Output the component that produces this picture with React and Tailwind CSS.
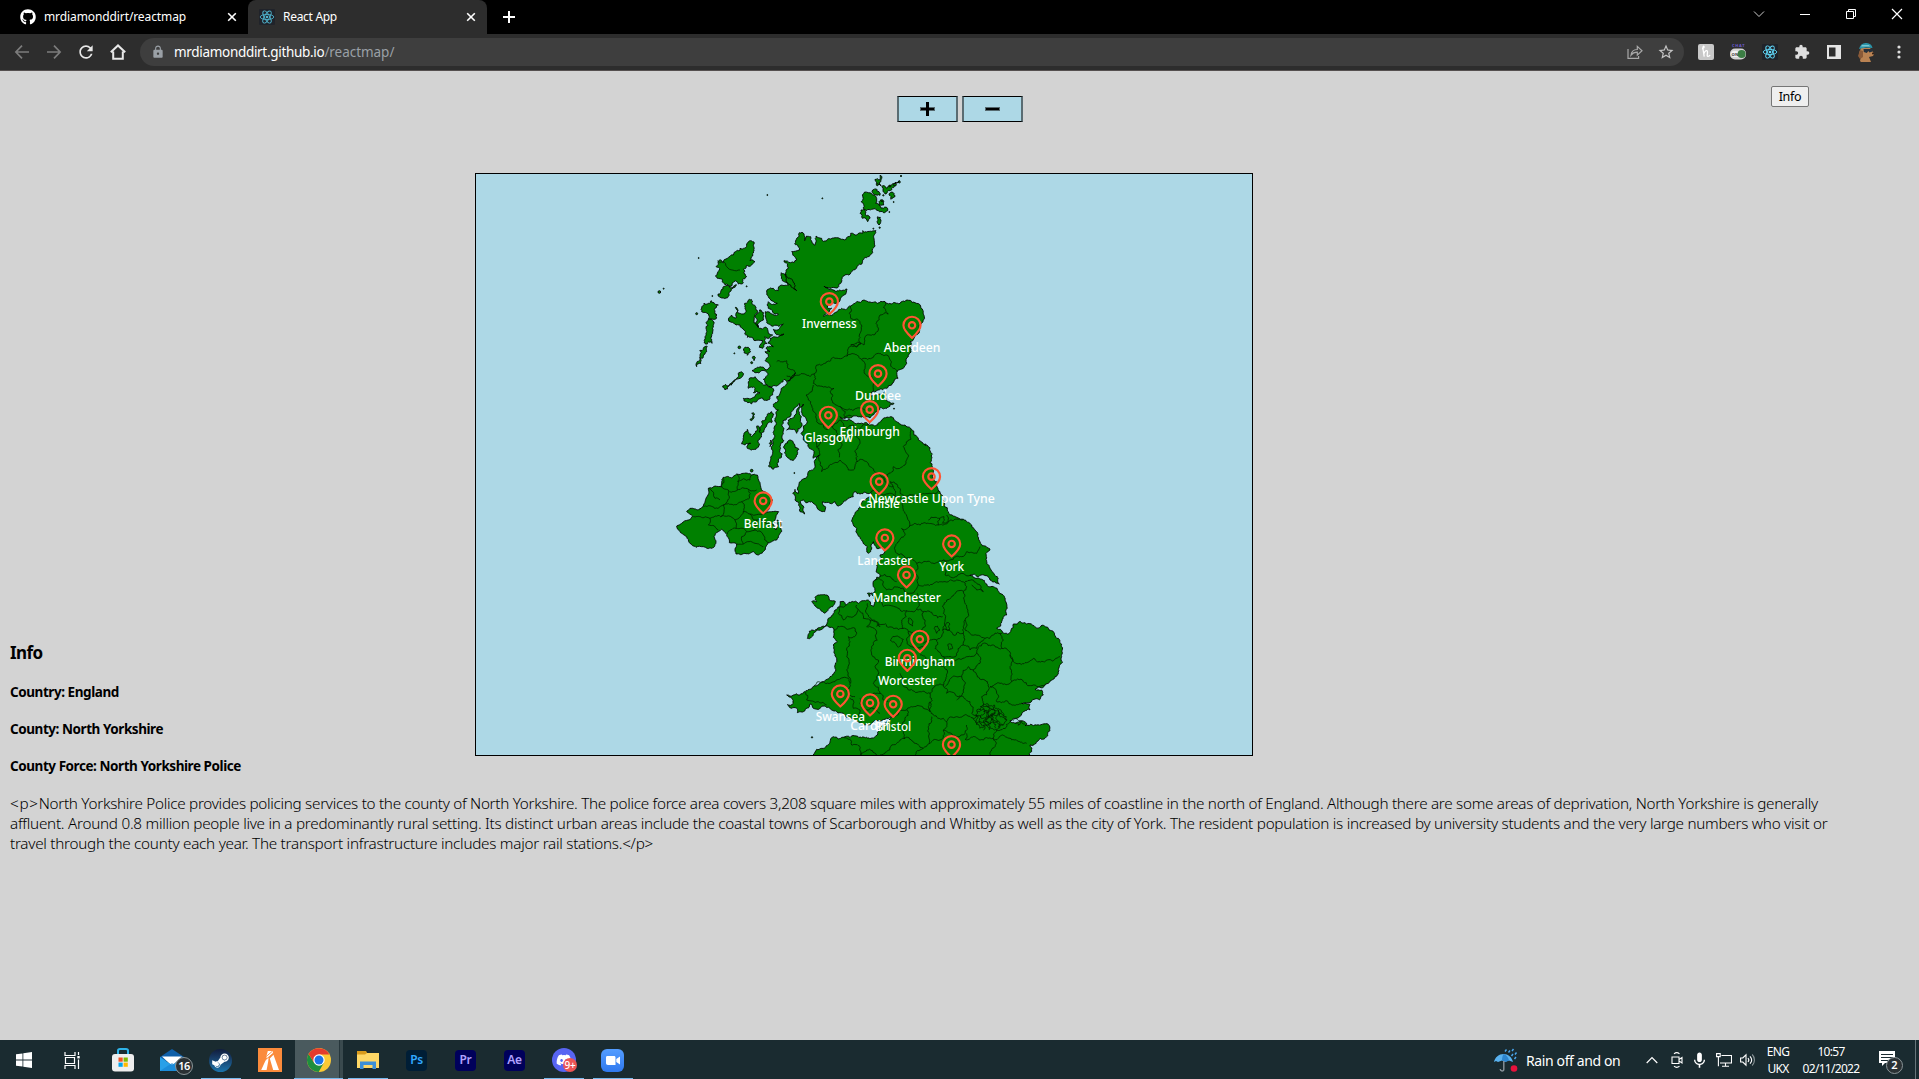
import React from "react";
import { FaGithub, FaSteamSymbol, FaDiscord } from "react-icons/fa";
import { MdExtension, MdRefresh, MdLock, MdStarBorder, MdMic } from "react-icons/md";

/* ---------- coastline helpers ---------- */

// Turns a coarse "x,y x,y" outline into an irregular, coast-like path.
function rough(str, amount, closed, seed = 7) {
  let s = seed;
  const rnd = () => {
    s = (s * 16807) % 2147483647;
    return s / 2147483647 - 0.5;
  };
  const pts = str.trim().split(/\s+/).map((p) => p.split(",").map(Number));
  if (closed) pts.push(pts[0]);
  const out = [pts[0]];
  const split = (a, b) => {
    const dx = b[0] - a[0];
    const dy = b[1] - a[1];
    const len = Math.hypot(dx, dy);
    if (len < 6) {
      out.push(b);
      return;
    }
    const k = rnd() * amount;
    const m = [(a[0] + b[0]) / 2 - dy * k, (a[1] + b[1]) / 2 + dx * k];
    split(a, m);
    split(m, b);
  };
  for (let i = 1; i < pts.length; i++) split(pts[i - 1], pts[i]);
  return "M" + out.map((p) => p[0].toFixed(1) + " " + p[1].toFixed(1)).join("L") + (closed ? "Z" : "");
}

const shift = (str, dx, dy) =>
  str
    .trim()
    .split(/\s+/)
    .map((p) => {
      const [x, y] = p.split(",").map(Number);
      return x + dx + "," + (y + dy);
    })
    .join(" ");

const NORTH =
  "478,188 492,192 494,212 500,198 512,200 516,216 524,226 528,198 545,205 550,214 565,206 580,204 600,206 632,198 632,190 650,195 668,190 668,182 680,186 695,184 708,182 702,205 705,228 698,248 672,265 655,285 640,300 625,315 605,328 597,342 590,354 570,355 552,348 566,358 592,362 605,362 621,357 612,375 600,392 588,400 575,402 562,412 575,414 566,428 550,438 575,436 592,425 605,415 632,408 650,395 672,390 690,396 712,400 735,395 765,398 795,395 825,398 842,408 850,425 853,440 845,460 838,485 822,505 810,530 805,560 800,580 790,595 772,602 774,625 755,645 740,655 715,660 700,664 692,678 708,672 735,665 735,680 762,700 745,712 722,712 712,722 700,735 690,744 660,740 640,738 615,745 600,740 612,750 640,755 680,758 700,765 722,755 730,745 745,742 770,755 795,765 812,775 822,795 835,810 850,822 864,828 870,842 875,865";

const EAST_AND_SOUTH =
  "457,200 470,245 480,275 487,300 492,318 505,335 520,348 550,358 575,375 590,395 597,420 608,438 630,447 618,460 618,478 628,500 640,518 652,530 658,552 645,545 630,540 612,525 595,530 570,526 595,534 615,548 640,560 660,580 675,600 682,625 680,645 665,665 650,685 668,697 682,702 693,690 700,672 740,672 790,676 815,692 835,715 845,740 845,770 838,800 825,830 805,850 790,862 765,868 785,870 790,885 778,900 750,908 725,910 750,914 750,930 725,942 700,955 690,962 705,970 720,964 740,970 735,977 770,975 805,973 805,995 795,1015 770,1025 750,1035 755,1055 745,1085 105,1085 110,1048 125,1045 150,1025 160,1010 190,1012 230,1008 260,1012 285,1010 300,985 320,965 337,948 320,955 300,963 280,965 255,975 235,965 215,955 190,940 170,935 155,930 135,918 120,925 100,925 90,912 75,932 52,938 50,925 22,914 40,910 35,895 20,885 40,885 75,875 100,860 130,845 150,830 165,805 170,780 162,755 160,735 172,725 160,712 162,690 145,680 120,690 100,700 82,715 95,690 125,680 145,655 165,630 180,605 200,614 235,610 250,602 262,600 280,620 285,600 274,580 268,590 262,580 285,572 280,560 285,540 300,530 288,515 290,495 300,480 300,465 315,455 305,440 290,445 280,425 272,455 265,460 262,440 245,420 230,385 218,368 225,340 240,320 255,300 275,290 272,278 240,282 225,275 220,290 200,300 175,318 165,305 150,310 128,305 134,335 110,320 95,305 70,300 60,305 74,342 60,335 45,300 38,280 45,268 55,280 75,235 85,215 105,200 105,180 118,165";

const WEST =
  "520,865 522,850 508,835 490,810 483,790 490,768 502,755 494,740 484,725 490,702 478,715 484,740 470,790 460,778 440,780 445,750 465,735 478,700 455,725 440,745 425,765 430,790 420,830 415,870 416,890 400,898 385,888 390,875 398,850 404,800 402,775 405,745 415,720 400,710 415,690 410,680 432,650 450,632 466,608 440,635 432,628 410,648 380,645 370,628 385,612 345,608 336,602 345,596 375,598 390,590 375,572 385,560 375,545 390,545 378,535 400,530 385,520 390,505 412,502 420,498 432,492 405,488 400,478 430,462 400,468 380,458 376,425 402,435 415,432 385,415 385,395 412,400 385,380 384,358 400,355 415,362 420,348 445,346 424,325 424,308 445,325 470,362 452,345 436,310 445,295 432,272 452,278 470,270 455,245 478,240 464,222 470,205";

const MAINLAND = NORTH + " " + shift(EAST_AND_SOUTH, 420, 690) + " " + WEST;

const ISLANDS = [
  "332,212 342,232 338,258 330,272 345,275 335,285 318,288 310,298 320,320 310,338 295,342 282,335 275,348 255,345 232,325 226,318 238,300 228,290 236,272 250,278 262,265 280,255 300,235 320,222",
  "250,350 270,354 290,345 270,365 250,384 234,372 244,360",
  "185,410 205,400 214,392 222,398 235,405 225,425 230,435 222,448 205,445 205,432 185,425",
  "200,455 215,448 222,460 218,490 212,505 216,520 196,522 195,500 198,475",
  "180,555 190,535 202,530 200,545 190,560 180,565 170,590 168,582",
  "270,455 275,435 290,442 292,425 286,412 305,432 318,425 314,400 328,388 340,405 342,450 358,475 374,472 385,490 398,495 375,500 368,535 358,532 368,512 345,512 322,502 312,480 300,465 285,462",
  "358,420 363,420 360,455 354,472 352,450",
  "310,540 325,532 332,545 322,556 312,548",
  "338,560 346,562 342,572",
  "325,640 345,620 360,635 385,650 402,662 390,685 365,684 350,695 320,695 310,685 345,680 360,668 340,668 345,655 325,655",
  "248,648 265,648 290,625 308,608 305,622 275,645 255,660",
  "395,725 398,742 380,765 365,790 358,792 362,770 378,748",
  "350,768 358,785 354,815 356,828 335,840 322,835 332,820 305,822 312,790 322,778 335,800 345,790",
  "445,812 460,820 468,862 455,870 440,860 432,835",
  "335,730 344,732 335,752 330,748",
  "392,810 390,830 388,820",
  "667,75 685,68 703,75 710,90 707,100 720,108 730,115 740,112 743,122 730,128 715,122 695,118 680,122 670,115",
  "663,120 677,125 690,145 683,155 667,145 660,130",
  "713,140 723,150 717,165 711,155",
  "705,28 717,30 720,16 726,20 717,38 723,48 709,40",
  "725,50 740,55 755,45 770,38 778,32 763,50 745,62 735,72 729,60",
  "747,75 760,68 765,80 753,88",
  "698,60 717,65 720,76 703,74",
  "717,95 730,92 731,105 722,106",
];

const IRELAND =
  "250,112 275,114 290,102 310,100 335,105 352,105 358,125 364,148 372,155 388,165 398,180 388,205 370,222 395,215 416,215 408,230 400,252 408,270 412,240 422,245 425,275 410,300 385,308 375,330 355,345 340,335 315,340 288,342 285,325 290,312 268,308 262,290 245,268 235,275 222,290 228,305 215,325 190,320 168,322 148,308 140,290 120,275 110,258 125,250 145,240 158,228 140,215 150,205 175,210 190,198 198,175 205,145 225,138 245,140";

const ANGLESEY = "95,605 110,605 105,592 115,585 140,585 148,600 166,604 158,620 135,640 115,625 105,618";

const NORTH_BORDERS = [
  "632,408 628,430 632,445 660,460 658,495 662,522 632,525",
  "662,522 635,528 622,558 580,562 560,575 530,585 522,612 510,620 440,618",
  "735,395 730,412 745,432 720,435 708,460 715,480 690,495 675,500 672,525 632,525",
  "622,558 665,568 700,562 715,550 740,555 752,572 760,595 774,605",
  "665,568 672,600 695,620 700,664",
  "522,612 520,640 555,650 582,655 570,665 575,690 600,710 625,718 650,715 690,735",
  "520,645 498,675 505,690 518,720 530,755",
  "600,710 615,745 640,738",
  "466,608 440,572 410,575",
  "530,755 560,780 575,770 600,750 615,775 640,765 660,780",
  "520,805 530,830 535,860 540,875 545,905 560,895 580,880 600,870 625,900 640,900 650,875 660,820 650,800 660,780",
  "660,780 680,765 690,760",
  "650,875 680,875 690,890 715,910 740,940 760,950",
  "795,885 760,890 740,915 745,930",
  "812,775 790,830 805,860 795,885",
  "575,770 590,800 605,820 598,862",
  "530,830 560,810 590,815",
  "232,272 260,290 300,300",
];

const IRELAND_BORDERS = [
  "250,112 245,140 265,150 268,175 250,195 235,205 190,200",
  "292,102 295,125 292,150 268,155",
  "292,125 330,120 335,105",
  "292,150 325,148 350,150",
  "325,148 328,175 305,185 280,195 250,195",
  "305,185 310,215 330,222 370,222",
  "250,195 242,230 210,235 160,230",
  "210,235 205,255 235,270",
  "242,230 285,240 310,215",
  "285,240 288,265 262,282",
  "288,265 320,275 345,270 350,240 330,222",
  "320,275 305,290 310,312 290,312",
  "345,270 370,285 385,308",
  "350,240 380,250 400,252",
  "310,312 345,310 370,320",
  "205,145 225,175 240,180",
];

const SOUTH_BORDERS = [
  "272,278 310,285 345,290 340,265 330,245",
  "330,245 360,280 400,285 450,280 475,272",
  "345,290 370,305 375,340 388,380",
  "388,380 365,385 375,400 345,440 350,460",
  "388,380 420,375 445,370 475,375 500,372 520,362 550,358",
  "475,375 480,355 492,350 488,370 505,365 500,345",
  "445,360 465,352 480,355",
  "350,460 375,475 410,490 440,485 470,488 490,480 520,478",
  "520,478 545,470 560,455 590,460 600,440",
  "490,480 500,500 495,525 530,530 570,526",
  "410,490 405,520 415,555 440,555 470,545 495,545 530,540 545,545",
  "285,540 310,545 320,570 345,560 370,565 385,580 415,555",
  "300,530 330,530 350,545",
  "285,600 310,620 350,622 380,632 410,628 412,580",
  "410,628 430,635 435,660 425,690 405,700",
  "380,632 365,660 368,685 385,695 405,700",
  "385,655 395,660 398,678 388,672 385,655",
  "545,545 560,560 550,575 525,580 500,600 490,640 495,660 488,690 520,705 550,700 555,660 560,620 555,585 550,575",
  "555,545 600,555 610,575 590,570 575,555",
  "555,660 555,690 575,705 615,715 640,705 668,697",
  "430,635 460,645 488,650",
  "462,685 472,678 480,690 470,700 462,685",
  "500,668 510,672 508,690 498,688 500,668",
  "503,735 515,733 518,745 508,750 503,735",
  "488,690 470,720 450,720 430,730",
  "470,720 465,745 490,770 530,765 550,735 550,700",
  "550,735 570,750 590,745 615,715",
  "200,614 180,620 175,640 190,660 220,650 235,630",
  "235,630 250,655 270,660 300,680 290,665 265,645 262,610",
  "235,630 230,615",
  "162,690 190,680 225,685 230,700",
  "230,700 205,710 210,725 200,750 208,790 205,830 212,850",
  "270,660 260,680 290,695 292,720 275,740 275,765 295,780 285,800",
  "290,680 340,685 370,685",
  "331,720 352,708 370,718 355,742 331,720",
  "285,800 290,830 280,850 300,880 270,890",
  "100,860 130,845 165,845 205,835 210,850 200,870 225,890",
  "75,875 80,900 115,905 140,915",
  "210,895 220,925 240,930 245,965",
  "240,895 240,910 260,930 280,925 300,940",
  "300,880 310,900 325,905",
  "420,765 440,780 465,790 495,805 500,830 490,855",
  "385,695 380,720 410,745 430,740",
  "360,820 365,850 385,870 420,875 450,880 470,855 490,855",
  "450,880 445,920 460,945 490,955 500,965",
  "490,770 500,790 530,780 560,770 590,760 610,730 640,735 665,745 670,720 660,700",
  "665,745 690,765 700,785 760,775 790,785 840,770",
  "690,765 690,800 695,845 660,850 630,860",
  "695,845 730,845 760,855 800,850",
  "590,760 600,790 580,810 615,840 625,870",
  "580,810 565,800 545,830 530,830 495,860",
  "545,830 550,870 535,890 500,880 490,855",
  "530,900 550,890 570,905 575,940 590,950",
  "625,870 605,890 610,920 640,930",
  "630,860 650,880 650,905 700,915 725,910",
  "500,965 530,950 560,945 590,970",
  "500,965 490,990 530,1010 555,1000 560,975",
  "560,1000 555,1018 600,1020 640,1015 650,990 690,965",
  "640,1015 645,1040 630,1070",
  "640,1020 690,1015 740,1030",
  "345,950 380,930 430,925 450,935 450,905",
  "380,930 375,960 370,990 375,1015 350,1030 320,1055 260,1050 240,1065",
  "370,1015 400,1025 430,1045 450,1030 445,980 455,950",
  "190,1012 215,1035 240,1040 245,1065",
  "450,1030 480,1020 490,990",
  "405,1070 420,1050 430,1045",
];

const LONDON = [
  "580,955 600,948 620,955 640,945 665,950 680,960",
  "590,935 605,930 620,940 640,928 660,940 672,950",
  "590,975 610,968 630,972 650,966 670,975",
  "600,920 608,945 600,970 610,990",
  "620,915 622,940 618,960 628,990",
  "640,920 632,945 640,965 645,985",
  "655,930 650,950 660,968 658,985",
  "600,985 625,982 650,988 665,975 680,962 670,940 650,925 630,918 605,920 592,935 595,950 588,968 600,985",
  "610,935 630,950 645,938 635,960 620,950",
  "625,945 612,960 625,975 640,958 655,965",
  "700,962 712,958 725,968 735,972",
  "705,970 715,976 722,966",
];

const SPECKS = [
  [382, 75], [547, 85], [176, 264], [58, 366, 4], [71, 356], [320, 349], [170, 431, 3], [217, 378], [283, 550], [298, 532, 4],
  [335, 578, 3], [700, 176], [748, 126], [761, 96], [783, 18, 2], [750, 48, 3], [726, 92, 3], [712, 44, 3], [765, 44, 4],
  [762, 716], [463, 909], [335, 902, 4], [516, 1702, 2], [856, 824, 2], [778, 36, 3], [730, 76, 2], [719, 173, 2],
];

const CITIES = [
  ["Inverness", 568, 436, 164],
  ["Aberdeen", 816, 507, 170],
  ["Dundee", 714, 652, 138],
  ["Glasgow", 565, 777, 148],
  ["Edinburgh", 689, 760, 181],
  ["Carlisle", 717.5, 976, 124],
  ["Newcastle Upon Tyne", 874.5, 961, 380],
  ["Belfast", 369.5, 1034, 116],
  ["Lancaster", 734.5, 1145, 165],
  ["York", 935, 1163, 75],
  ["Manchester", 799.5, 1256, 206],
  ["Birmingham", 839.5, 1449, 211],
  ["Worcester", 802, 1506, 176],
  ["Swansea", 601, 1613, 148],
  ["Cardiff", 690, 1640, 118],
  ["Bristol", 759.5, 1644, 108],
  ["", 934.5, 1765, 0],
];

function MapChart() {
  return (
    <svg viewBox="-492 12 2328 1743" className="block h-full w-full" fontFamily='"Noto Sans", "Open Sans", sans-serif'>
      <g fill="#008000" stroke="#000" strokeWidth="2.6" strokeLinejoin="round">
        <path d={rough(MAINLAND, 0.46, true)} />
        {ISLANDS.map((d, i) => (
          <path key={i} d={rough(d, 0.6, true, 11 + i)} />
        ))}
        <path d={rough(shift(IRELAND, 0, 810), 0.3, true, 5)} />
        <path d={rough(shift(ANGLESEY, 420, 690), 0.35, true, 9)} />
        {SPECKS.map(([x, y, r = 1.5], i) => (
          <circle key={i} cx={x} cy={y} r={r} />
        ))}
      </g>
      <g fill="none" stroke="#001a00" strokeWidth="2.2">
        {NORTH_BORDERS.map((d, i) => (
          <path key={i} d={rough(d, 0.45, false, 21 + i)} />
        ))}
        {IRELAND_BORDERS.map((d, i) => (
          <path key={i} d={rough(shift(d, 0, 810), 0.35, false, 41 + i)} />
        ))}
        {SOUTH_BORDERS.map((d, i) => (
          <path key={i} d={rough(shift(d, 420, 690), 0.45, false, 61 + i)} />
        ))}
        {LONDON.map((d, i) => (
          <path key={i} d={rough(shift(d, 420, 690), 0.7, false, 91 + i)} />
        ))}
      </g>
      {CITIES.map(([name, x, y, w]) => (
        <g key={x} transform={`translate(${x} ${y + 4})`}>
          <g transform="scale(3.22) translate(-12 -24)" fill="none" stroke="#FF5533" strokeWidth="2" strokeLinecap="round" strokeLinejoin="round">
            <circle cx="12" cy="10" r="3" />
            <path d="M12 21.7C17.3 17 20 13 20 10a8 8 0 1 0-16 0c0 3 2.7 6.9 8 11.7z" />
          </g>
          {name && (
            <text x={-w / 2} y="34.500" fontSize="38.500" fontWeight="500" fill="#fff" textLength={w} lengthAdjust="spacingAndGlyphs">
              {name}
            </text>
          )}
        </g>
      ))}
    </svg>
  );
}

/* ---------- small drawings ---------- */

function Atom({ className, color = "#61dafb" }) {
  return (
    <svg viewBox="0 0 16 16" className={className} fill="none" stroke={color} strokeWidth="0.9">
      <rect width="16" height="16" fill="#20232a" stroke="none" rx="1" />
      <ellipse cx="8" cy="8" rx="6.8" ry="2.6" />
      <ellipse cx="8" cy="8" rx="6.8" ry="2.6" transform="rotate(60 8 8)" />
      <ellipse cx="8" cy="8" rx="6.8" ry="2.6" transform="rotate(120 8 8)" />
      <circle cx="8" cy="8" r="1.3" fill={color} stroke="none" />
    </svg>
  );
}

function Cross({ className }) {
  return (
    <svg viewBox="0 0 10 10" className={className} stroke="#fff" strokeWidth="1.6">
      <path d="M1.2 1.2l7.6 7.6M8.8 1.2L1.2 8.8" />
    </svg>
  );
}

function TabStrip() {
  return (
    <div className="flex h-[34px] bg-black text-[12px] text-white">
      <div className="flex w-[248px] items-center pl-5">
        <FaGithub className="size-4" />
        <span className="ml-2 tracking-[-0.1px]">mrdiamonddirt/reactmap</span>
        <Cross className="mr-[11px] ml-auto size-[10px]" />
      </div>
      <div className="flex w-[239px] items-center rounded-t-lg bg-[#2d2d2d] pl-[11px]">
        <Atom className="size-4" color="#4fb3cc" />
        <span className="ml-2 tracking-[-0.3px]">React App</span>
        <Cross className="mr-[11px] ml-auto size-[10px]" />
      </div>
      <div className="flex w-11 items-center justify-center">
        <svg viewBox="0 0 12 12" className="size-3" stroke="#fff" strokeWidth="2">
          <path d="M6 0v12M0 6h12" />
        </svg>
      </div>
      <div className="-mr-px ml-auto flex h-7 text-white">
        <svg viewBox="0 0 12 12" className="mx-[17px] mt-2 size-3" fill="none" stroke="#ccc" strokeWidth="1">
          <path d="M1 3.500l5 5 5-5" />
        </svg>
        <svg viewBox="0 0 12 12" className="mx-[17px] mt-2 size-3" stroke="#fff" strokeWidth="1">
          <path d="M1 6.500h10" />
        </svg>
        <svg viewBox="0 0 12 12" className="mx-[17px] mt-2 size-3" fill="none" stroke="#fff" strokeWidth="1">
          <path d="M1.500 3.500h7v7h-7zM3.500 3.500v-2h7v7h-2" />
        </svg>
        <svg viewBox="0 0 12 12" className="mx-[17px] mt-2 size-3" stroke="#fff" strokeWidth="1.200">
          <path d="M1 1l10 10M11 1L1 11" />
        </svg>
      </div>
    </div>
  );
}

function Toolbar() {
  return (
    <div className="flex h-[37px] items-center border-b border-[#55504f] bg-[#2d2d2d]">
      <div className="flex w-[140px] items-center pl-[14px]">
        <svg viewBox="0 0 16 16" className="size-4" fill="none" stroke="#7c7c7c" strokeWidth="1.700">
          <path d="M15 8H2M8 1.700L1.900 8 8 14.300" />
        </svg>
        <svg viewBox="0 0 16 16" className="ml-4 size-4" fill="none" stroke="#7c7c7c" strokeWidth="1.700">
          <path d="M1 8h13M8 1.700L14.100 8 8 14.300" />
        </svg>
        <MdRefresh className="ml-[14px] size-5 text-[#e8e8e8]" />
        <svg viewBox="0 0 16 16" className="ml-[14px] size-4" fill="none" stroke="#e8e8e8" strokeWidth="2">
          <path d="M0.800 8.200L8 1.400l7.200 6.800M3.200 7.500v7.300h9.600V7.500" />
        </svg>
      </div>
      <div className="flex h-7 w-[1544px] items-center rounded-full bg-[#3e3e3e] pr-[9px] pl-[11px] text-[13.5px]">
        <MdLock className="size-[14px] text-[#9aa0a6]" />
        <span className="ml-[9px] tracking-[-0.31px] text-white">mrdiamonddirt.github.io</span>
        <span className="tracking-[-0.04px] text-[#9aa0a6]">/reactmap/</span>
        <svg viewBox="0 0 16 16" className="ml-auto size-4" fill="none" stroke="#a9a9a9" strokeWidth="1.200">
          <path d="M1 5v9.400h10.600V12M4 11.200c.4-3.800 2.500-5.600 6.300-5.700V2.400L15 6.800l-4.700 4.300V8.200C7.600 8.200 5.600 9 4 11.200z" />
        </svg>
        <MdStarBorder className="ml-[14px] size-[18px] text-[#c4c4c4]" />
      </div>
      <div className="flex items-center gap-4 pl-[14px]">
        <svg viewBox="0 0 16 16" className="size-4">
          <rect width="16" height="16" rx="2" fill="#c8c8c8" />
          <path d="M4 4.500c1.500 0 2.500-1 2-2S4.800 3 5 5l1.200 7.600M6 9.500C7 6.500 9.500 5.500 9.500 8c0 2-1 4.600.6 4.400 1 0 1.600-.7 2-1.400" fill="none" stroke="#fff" strokeWidth="1.300" />
        </svg>
        <svg viewBox="0 0 16 16" className="size-4">
          <text x="2" y="3.400" fontSize="4" fontWeight="700" fill="#6a5acd" textLength="12.500">CHAT</text>
          <rect x="0" y="4.500" width="16" height="11" rx="5" fill="#d4d4d4" />
          <rect x="1" y="7" width="8" height="6" rx="3" fill="#f2f2f2" />
          <text x="1.600" y="11.600" fontSize="4.200" fontWeight="700" fill="#333">ON</text>
          <circle cx="11.600" cy="10" r="4" fill="#3b7d44" />
        </svg>
        <Atom className="size-4" />
        <MdExtension className="size-4 text-[#dedede]" />
        <svg viewBox="0 0 16 16" className="size-4">
          <path fill="#e4e4e4" d="M1 1h14v14H1z" />
          <path fill="#2d2d2d" d="M3 3.500h6.500v9H3z" />
        </svg>
        <svg viewBox="0 0 18 20" className="-mx-px h-5 w-[18px]">
          <path fill="#b98252" d="M4 6h9l3 4 1 2-1 2-4 1 2 5H4l-1-1 1-5-2-3z" />
          <path fill="#8a5a38" d="M3 8l3 1v6l-3 2-2-3z" />
          <path fill="#2b93a8" d="M2 7c1-4.500 4-6.500 7.500-6S15 3 15.500 6L9 5.500z" />
          <path fill="#7ac7d0" d="M5 3l7 0 1 1.500H4z" />
          <path fill="#25303c" d="M6.500 7h9v2.500l-3 1-1.200-1.500-1.500 2-3-1z" />
          <circle cx="16" cy="11.500" r="1" fill="#2a1b14" />
        </svg>
        <svg viewBox="0 0 16 16" className="ml-px size-4" fill="#dedede">
          <circle cx="8" cy="3" r="1.600" />
          <circle cx="8" cy="8" r="1.600" />
          <circle cx="8" cy="13" r="1.600" />
        </svg>
      </div>
    </div>
  );
}

function ZoomButton({ plus }) {
  return (
    <button className="flex h-[26px] w-[61px] items-center justify-center border-x-2 border-y border-x-[#5a6c72] border-y-black bg-[#add8e6]">
      <svg viewBox="0 0 15 14" className="h-[14px] w-[15px]" shapeRendering="crispEdges">
        <path fill="#56696f" d="M0 5h15v4H0z" />
        {plus && <path d="M6 0h3v14H6z" />}
        <path d="M1 6h13v2H1z" />
      </svg>
    </button>
  );
}

/* ---------- task bar ---------- */

function AppTile({ label, color, bg }) {
  return (
    <div className={`flex size-[21px] items-center justify-center rounded-[4px] text-[12px] font-semibold tracking-[-0.3px] ${bg} ${color}`}>
      {label}
    </div>
  );
}

function Task({ children, running, active }) {
  return (
    <div className="flex h-[39px] w-[49px] flex-col items-center">
      <div className="relative flex w-full flex-1 items-center justify-center pt-[2px]">
        {active ? (
          <div className="-mt-[2px] flex h-[38px] w-full pl-px">
            <div className="flex w-11 items-center justify-center bg-[#4a5a5e] pt-[2px] pl-1">{children}</div>
            <div className="w-px bg-[#26363b]" />
            <div className="w-[3px] bg-[#3a4a4e]" />
          </div>
        ) : (
          children
        )}
      </div>
      <div className={`h-px ${running ? "bg-[#76b9ed]" : ""} ${active ? "w-full" : "w-10"}`} />
    </div>
  );
}

function TaskBar() {
  return (
    <div className="flex h-[39px] items-stretch bg-[#1a2b30] text-white">
      <Task>
        <svg viewBox="0 0 16 16" className="-ml-px size-4" fill="#fff">
          <path d="M0 2.300l6.500-.9v6.200H0zM7.300 1.300L16 0v7.600H7.300zM0 8.400h6.500v6.200L0 13.700zM7.300 8.400H16V16l-8.700-1.200z" />
        </svg>
      </Task>
      <Task>
        <svg viewBox="0 0 17 17" className="-ml-0.5 size-[17px]" fill="none" stroke="#fff" strokeWidth="1.200">
          <path d="M1 0v3.500h10V0M1 17v-3.500h10V17M1.500 5.500h9v6h-9zM14.500 0v3M14.500 7.500V17" />
          <path d="M13.300 4h2.400v2.400h-2.400z" fill="#fff" stroke="none" />
        </svg>
      </Task>
      <Task>
        <svg viewBox="0 0 24 24" className="size-6">
          <path d="M7 7V2.800C7 1.500 7.800 1 9 1h6c1.200 0 2 .5 2 1.800V7" fill="none" stroke="#2fb4e9" strokeWidth="2" />
          <rect x="1" y="6" width="22" height="17.500" rx="3" fill="#eeeeee" />
          <path fill="#f25022" d="M7.500 9.500h4.200v4.200H7.500z" />
          <path fill="#7fba00" d="M12.600 9.500h4.200v4.200h-4.200z" />
          <path fill="#00a4ef" d="M7.500 14.600h4.200v4.200H7.500z" />
          <path fill="#ffb900" d="M12.600 14.600h4.200v4.200h-4.200z" />
        </svg>
      </Task>
      <Task>
        <svg viewBox="0 0 24 22" className="h-[22px] w-6">
          <path fill="#0f5fa8" d="M12 0l12 8v4H0V8z" />
          <path fill="#fff" d="M2 7.500h20L12 17z" />
          <path fill="#28a0e8" d="M0 8l12 8 12-8v14H0z" />
          <path fill="#1683d3" d="M0 22l12-8 12 8z" opacity=".7" />
        </svg>
        <span className="absolute top-[17px] left-[28px] flex size-[18px] items-center justify-center rounded-full border border-[#8b9598] bg-[#2a3134] text-[11px] font-semibold tracking-[-0.5px]">16</span>
      </Task>
      <Task running>
        <span className="flex size-[23px] items-center justify-center rounded-full bg-linear-to-b from-[#101c3d] to-[#1a74ac]">
          <FaSteamSymbol className="size-[19px]" />
        </span>
      </Task>
      <Task>
        <svg viewBox="0 0 24 24" className="size-6">
          <path fill="#fb8b3c" d="M0 0h24v24H0z" />
          <path fill="#fff" d="M9.800 3h4.600l.7 2.200-6 5.300L8.200 9zM15.500 6.800l.6 1.700L21 22h-5.800l-3.400-11.500zM8 11.500l2.600-2-.4 4L8.600 22H3.200z" />
          <path stroke="#fb8b3c" strokeWidth=".9" d="M7 12.200l9-7.600M8 8.700l6-5.200" />
        </svg>
      </Task>
      <Task running active>
        <svg viewBox="0 0 24 24" className="size-6">
          <circle cx="12" cy="12" r="12" fill="#fcc934" />
          <path fill="#1e8e3e" d="M1.600 6L7.150 14.800 12 12l4.850 2.800L11.700 24A12 12 0 0 1 1.600 6z" />
          <path fill="#e33b2e" d="M1.600 6A12 12 0 0 1 22.400 6.400H12V12l-4.850 2.800z" />
          <circle cx="12" cy="12" r="5.700" fill="#fff" />
          <circle cx="12" cy="12" r="4.500" fill="#1a73e8" />
        </svg>
      </Task>
      <Task running>
        <svg viewBox="0 0 22 18" className="h-[18px] w-[22px]">
          <path fill="#d99b1c" d="M0 0h9l1.500 2.500V6H0z" />
          <path fill="#ffd866" d="M0 3.500h8l2-1.500h12v15H0z" />
          <path fill="#3d8fd6" d="M3 10.500h16V18h-3.500v-4h-9v4H3z" />
        </svg>
      </Task>
      <Task>
        <AppTile label="Ps" bg="bg-[#001e36]" color="text-[#31a8ff]" />
      </Task>
      <Task>
        <AppTile label="Pr" bg="bg-[#00005b]" color="text-[#b0a0ff]" />
      </Task>
      <Task>
        <AppTile label="Ae" bg="bg-[#00005b]" color="text-[#b0a0ff]" />
      </Task>
      <Task running>
        <span className="flex size-6 items-center justify-center rounded-full bg-[#5865f2]">
          <FaDiscord className="size-4" />
        </span>
        <span className="absolute top-[18px] left-[24px] flex size-[14px] items-center justify-center rounded-full bg-[#ed5555] text-[10px] font-medium tracking-[-0.3px]">9+</span>
      </Task>
      <Task running>
        <span className="flex h-[23px] w-[23px] items-center justify-center rounded-[6px] bg-linear-to-b from-[#549dff] to-[#2f78ee]">
          <svg viewBox="0 0 14 9" className="h-[9px] w-[14px]" fill="#fff">
            <path d="M0 1.500C0 .5.500 0 1.500 0H8c1 0 1.500.6 1.500 1.500V9H2C.7 9 0 8.300 0 7zM10.300 3L14 .6v7.800L10.300 6z" />
          </svg>
        </span>
      </Task>

      <div className="ml-auto flex items-center pt-px">
        <svg viewBox="0 0 24 24" className="mr-2 size-6">
          <path fill="#59b2ef" d="M0 14C1 9 5 6 9.500 6S18 9 19 14l-4-1.500-4 1.500-3-1.500-4 1.500-2-1z" />
          <path fill="#2d86cf" d="M9.500 6C13 7 14.500 10 15 12.500L11 14l-3-1.500C8 10 8.500 8 9.500 6z" />
          <path d="M9.800 13v8.500c0 2-3.600 2-3.600-.4" fill="none" stroke="#8a949c" strokeWidth="1.400" />
          <path d="M11 3.500l1.500-2M14.500 4.500l1.500-2M18 3l1.500-2M17.500 8l1.500-2M21 6.500l1.500-2M20.500 11l1.500-2" stroke="#4aa8f0" strokeWidth="1.400" />
          <circle cx="20" cy="20.500" r="3.300" fill="#e8123c" />
        </svg>
        <span className="w-[120px] text-[14px] tracking-[-0.38px] whitespace-nowrap">Rain off and on</span>
        <svg viewBox="0 0 12 8" className="h-2 w-3" fill="none" stroke="#fff" strokeWidth="1.200">
          <path d="M.7 7L6 1.500 11.300 7" />
        </svg>
        <svg viewBox="0 0 12 16" className="ml-[13px] h-4 w-3" fill="none" stroke="#fff" strokeWidth="1.100">
          <path d="M3 1.800C4.500.5 7 .5 8.500 1.800M3 14.200c1.500 1.300 4 1.300 5.500 0M1 5h7v6.500H1zM8 7.500L11 5.500v5.500L8 9z" />
        </svg>
        <MdMic className="ml-[7px] size-[19px]" />
        <svg viewBox="0 0 16 14" className="ml-[7px] h-[14px] w-4" fill="none" stroke="#fff" strokeWidth="1.100">
          <path d="M5.500 2.500h10v7.500H4M9.500 10v3M6 13.300h7M.6.600h3.600v3H.6zM2.400 3.600V13.300" />
        </svg>
        <svg viewBox="0 0 16 14" className="ml-[8px] h-[14px] w-4" fill="none" stroke="#fff" strokeWidth="1.100">
          <path d="M.6 5h2.200L6 1.800v10.400L2.800 9H.6zM8 5c1 1.200 1 2.800 0 4M10 3.300c2 2.200 2 5.200 0 7.400" />
          <path d="M12.200 1.500c3 3.200 3 7.800 0 11" stroke="#8a9497" />
        </svg>
        <div className="ml-[10px] w-6 text-center text-[12px] leading-[17px] tracking-[-0.75px]">
          <div>ENG</div>
          <div>UKX</div>
        </div>
        <div className="ml-[10px] w-[62px] text-center text-[12px] leading-[17px] tracking-[-0.7px]">
          <div>10:57</div>
          <div>02/11/2022</div>
        </div>
        <div className="relative ml-[17px] h-[18px] w-9 self-center">
          <svg viewBox="0 0 16 15" className="h-[15px] w-4">
            <path fill="#fff" d="M0 0h16v12H6l-3 3v-3H0z" />
            <path stroke="#1a2b30" d="M2 3.500h12M2 6.500h12M2 9.500h12" />
          </svg>
          <span className="absolute top-[6px] left-[7px] flex size-[17px] items-center justify-center rounded-full border border-[#8b9598] bg-[#2a3134] text-[11px] font-semibold">2</span>
        </div>
      </div>
      <div className="mr-[3px] w-px bg-[#68757a]" />
    </div>
  );
}

/* ---------- page ---------- */

export default function App() {
  return (
    <div className="flex h-[1079px] w-[1919px] flex-col overflow-hidden bg-[#d3d3d3] font-['Noto_Sans','Open_Sans',sans-serif]">
      <TabStrip />
      <Toolbar />
      <main className="flex-1 text-black">
        <div className="grid h-[102px] grid-cols-[1fr_126px_1fr] items-start">
          <div />
          <div className="mt-[25px] flex gap-1">
            <ZoomButton plus />
            <ZoomButton />
          </div>
          <button className="mt-[15px] mr-[110px] flex h-[21px] w-[38px] items-center justify-center justify-self-end rounded-[2px] border border-[#767676] bg-[#efefef] pt-px text-[12.5px] tracking-[-0.3px]">
            Info
          </button>
        </div>
        <div className="flex h-[602px]">
          <section className="flex w-[475px] flex-col self-end pl-[10px] text-[13.5px] font-bold">
            <h3 className="text-[17px] leading-[24px] tracking-[-0.6px]">Info</h3>
            <h5 className="mt-[18px] leading-[18px] tracking-[-0.44px]">Country: England</h5>
            <h5 className="mt-[19px] leading-[18px] tracking-[-0.44px]">County: North Yorkshire</h5>
            <h5 className="mt-[19px] leading-[18px] tracking-[-0.44px]">County Force: North Yorkshire Police</h5>
          </section>
          <div className="h-[583px] w-[778px] border border-black bg-[#add8e6]">
            <MapChart />
          </div>
        </div>
        <div className="mt-[18px] pl-[10px] text-[15.25px] leading-5 font-light whitespace-nowrap">
          <p className="tracking-[-0.283px]">
            <span className="tracking-[0.7px]">&lt;p&gt;</span>North Yorkshire Police provides policing services to the county of North Yorkshire. The police force area covers 3,208 square miles with approximately 55 miles of coastline in the north of England. Although there are some areas of deprivation, North Yorkshire is generally
          </p>
          <p className="tracking-[-0.26px]">
            affluent. Around 0.8 million people live in a predominantly rural setting. Its distinct urban areas include the coastal towns of Scarborough and Whitby as well as the city of York. The resident population is increased by university students and the very large numbers who visit or
          </p>
          <p className="tracking-[-0.26px]">travel through the county each year. The transport infrastructure includes major rail stations.&lt;/p&gt;</p>
        </div>
      </main>
      <TaskBar />
    </div>
  );
}
